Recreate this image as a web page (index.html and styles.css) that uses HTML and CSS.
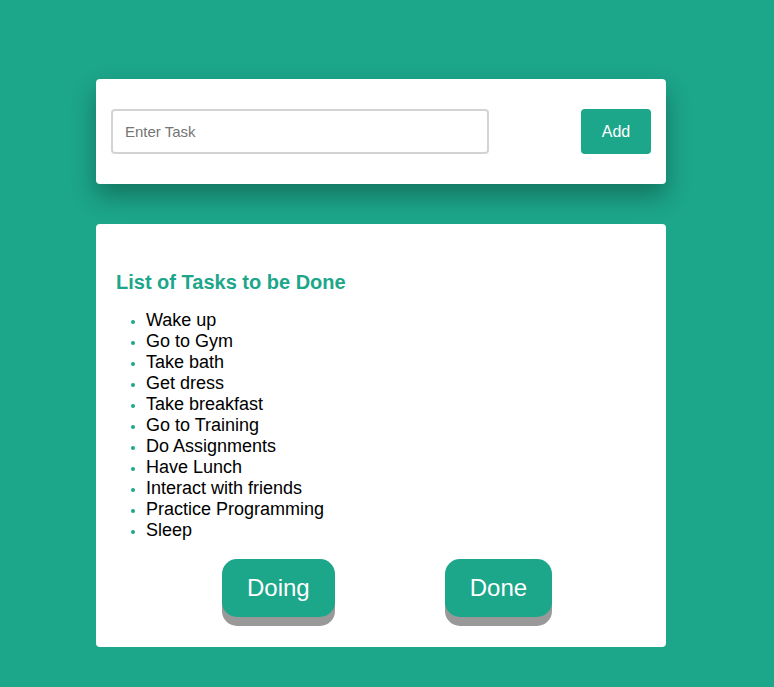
FILE: index.html
```html
<!DOCTYPE html>
<html>
<head>
<meta charset="utf-8">
<link rel="stylesheet" href="styles.css">
</head>
<body>
<div class="page">
  <div class="card add-card">
    <input class="task-input" type="text" placeholder="Enter Task">
    <button class="add-btn">Add</button>
  </div>
  <div class="card list-card">
    <h3 class="list-title">List of Tasks to be Done</h3>
    <ul class="task-list">
      <li>Wake up</li>
      <li>Go to Gym</li>
      <li>Take bath</li>
      <li>Get dress</li>
      <li>Take breakfast</li>
      <li>Go to Training</li>
      <li>Do Assignments</li>
      <li>Have Lunch</li>
      <li>Interact with friends</li>
      <li>Practice Programming</li>
      <li>Sleep</li>
    </ul>
    <div class="actions">
      <button class="big-btn">Doing</button>
      <button class="big-btn">Done</button>
    </div>
  </div>
</div>
</body>
</html>
```
FILE: styles.css
```css
html, body {
  margin: 0;
  padding: 0;
  background: #1ca68a;
  font-family: "Liberation Sans", Arial, sans-serif;
}
.page {
  padding: 79px 0 40px 96px;
  display: flex;
  flex-direction: column;
  gap: 40px;
}
.card {
  width: 570px;
  background: #fff;
  border-radius: 4px;
  box-sizing: border-box;
}
.add-card {
  height: 105px;
  display: flex;
  align-items: center;
  justify-content: space-between;
  padding: 0 15px;
  box-shadow: 0 12px 24px rgba(0, 0, 0, 0.3);
}
.task-input {
  width: 378px;
  height: 45px;
  box-sizing: border-box;
  border: 2px solid #d3d3d3;
  border-radius: 4px;
  padding: 0 12px;
  font-family: "Liberation Sans", Arial, sans-serif;
  font-size: 15px;
  color: #333;
  outline: none;
}
.task-input::placeholder {
  color: #757575;
}
.add-btn {
  width: 70px;
  height: 45px;
  border: none;
  border-radius: 4px;
  background: #1ca68a;
  color: #fff;
  font-family: "Liberation Sans", Arial, sans-serif;
  font-size: 16px;
  padding: 0;
}
.list-card {
  height: 423px;
  padding: 47px 20px 0 20px;
}
.list-title {
  margin: 0;
  font-size: 20px;
  line-height: 23px;
  font-weight: bold;
  color: #1ca68a;
}
.task-list {
  margin: 16px 0 0 0;
  padding-left: 30px;
  font-size: 18px;
  line-height: 21px;
  color: #000;
}
.task-list li::marker {
  color: #1ca68a;
  font-size: 13px;
}
.actions {
  display: flex;
  gap: 110px;
  margin-top: 18px;
  padding-left: 106px;
}
.big-btn {
  border: none;
  border-radius: 15px;
  background: #1ca68a;
  color: #fff;
  font-family: "Liberation Sans", Arial, sans-serif;
  font-size: 24px;
  line-height: 28px;
  padding: 15px 25px;
  box-shadow: 0 9px 0 #999;
}
```
